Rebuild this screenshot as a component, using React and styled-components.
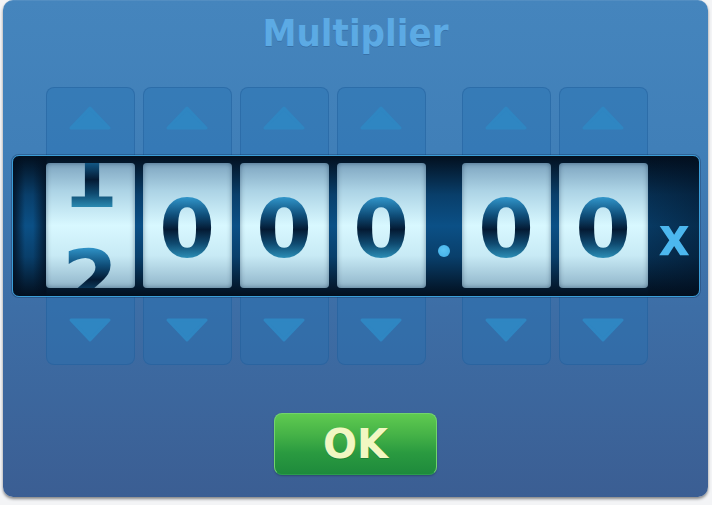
import React from 'react'
import styled, { createGlobalStyle } from 'styled-components'

let Global = createGlobalStyle`
  * {
    margin: 0;
    padding: 0;
    box-sizing: border-box;
  }
  html, body {
    background: #f3f4f6;
  }
  body {
    width: 712px;
    height: 505px;
    overflow: hidden;
    font-family: "DejaVu Sans", "Liberation Sans", sans-serif;
  }
`

let REEL_W = 89
let GAP = 8
let DOT_W = 20
let LINE = 100

let Panel = styled.div`
  margin: 0 4px 0 3px;
  height: 497px;
  border-radius: 10px;
  background: linear-gradient(to bottom, #4585bd 0%, #407fb8 30%, #3d6ea6 62%, #3b5e93 100%);
  box-shadow: 0 2px 3px rgba(0, 0, 0, 0.45), inset 0 1px 0 rgba(255, 255, 255, 0.08);
  display: flex;
  flex-direction: column;
  align-items: center;
  padding-top: 13px;
`

let Title = styled.h1`
  font-family: "DejaVu Sans Condensed", "DejaVu Sans", sans-serif;
  font-weight: bold;
  font-size: 38px;
  line-height: 40px;
  color: #5caae4;
  text-shadow: 0 1px 0 rgba(20, 60, 110, 0.25);
`

let Dial = styled.div`
  width: 688px;
  margin-top: 34px;
  display: flex;
  flex-direction: column;
`

let Track = styled.div`
  display: flex;
  gap: ${GAP}px;
  padding-left: ${p => p.$inset}px;
`

let Spacer = styled.div`
  width: ${DOT_W}px;
  flex: none;
`

let ArrowButton = styled.div`
  width: ${REEL_W}px;
  height: ${p => (p.$down ? 78 : 80)}px;
  flex: none;
  border-radius: 8px;
  background: rgba(38, 112, 178, 0.38);
  border: 1px solid rgba(30, 90, 150, 0.4);
  display: flex;
  justify-content: center;
  align-items: flex-start;
  padding-top: ${p => (p.$down ? 30 : 18)}px;
`

let UpRow = styled(Track)`
  margin-bottom: -12px;
`

let DownRow = styled(Track)`
  margin-top: -10px;
`

let Strip = styled.div`
  position: relative;
  z-index: 1;
  height: 142px;
  border: 1px solid #3b9ed8;
  border-radius: 7px;
  box-shadow: 0 0 0 1px rgba(20, 50, 90, 0.35);
  padding: 7px 0 8px;
  display: flex;
  align-items: stretch;
  background:
    linear-gradient(to right, rgba(2, 14, 30, 0.85) 0px, rgba(2, 14, 30, 0) 12px, rgba(2, 14, 30, 0) 20px, rgba(2, 14, 30, 0.75) 33px, rgba(2, 14, 30, 0) 34px),
    linear-gradient(to left, rgba(2, 14, 30, 0.55) 0px, rgba(2, 14, 30, 0.35) 50px, rgba(2, 14, 30, 0) 52px),
    linear-gradient(to bottom, #020f1e 0%, #093f6b 28%, #0b5086 50%, #093f6b 72%, #020f1e 100%);
`

let Reel = styled.div`
  width: ${REEL_W}px;
  flex: none;
  border-radius: 4px;
  overflow: hidden;
  position: relative;
  background: linear-gradient(to bottom, #7ea5c0 0%, #acd3e5 22%, #d8f8ff 50%, #c8eaf5 74%, #90b5ca 100%);
  box-shadow: inset 0 0 5px rgba(0, 30, 60, 0.45);
`

let Column = styled.div`
  display: flex;
  flex-direction: column;
`

let Digit = styled.div`
  height: ${LINE}px;
  font-weight: bold;
  font-size: 80px;
  line-height: ${LINE}px;
  text-align: center;
  background: linear-gradient(to bottom, #2e90c4 19%, #0f4d78 36%, #041a33 50%, #0f4a70 64%, #2a8cb4 78%);
  -webkit-background-clip: text;
  background-clip: text;
  color: transparent;
`

let DotSlot = styled.div`
  width: ${DOT_W}px;
  flex: none;
  display: flex;
  justify-content: center;
  padding-top: 82px;
`

let Dot = styled.div`
  width: 12px;
  height: 12px;
  border-radius: 50%;
  background: radial-gradient(circle at 45% 40%, #5cc4f4, #40aee6);
`

let Times = styled.div`
  margin-left: 11px;
  font-family: "DejaVu Sans Condensed", "DejaVu Sans", sans-serif;
  font-weight: bold;
  font-size: 54px;
  line-height: 54px;
  padding-top: 47px;
  color: #4cb7ee;
`

let OkButton = styled.button`
  margin-top: 48px;
  width: 163px;
  height: 62px;
  padding: 0;
  border-radius: 8px;
  border: 1px solid #72d46c;
  border-bottom-color: #2a9c4c;
  background: linear-gradient(to bottom, #5fca50 0%, #45b247 35%, #2a9a40 65%, #1e8a3c 100%);
  box-shadow: 0 1px 2px rgba(0, 0, 0, 0.25);
  font-family: "DejaVu Sans", sans-serif;
  font-weight: bold;
  font-size: 40px;
  line-height: 58px;
  color: #f2f7c2;
  text-shadow: 0 1px 0 rgba(10, 70, 30, 0.3);
  cursor: pointer;
`

function Triangle ({ down }) {
  return (
    <svg width="42" height="24" viewBox="0 0 42 24">
      <path
        d={down ? 'M21 22 L40 2 L2 2 Z' : 'M21 2 L40 22 L2 22 Z'}
        fill="#2f86c2"
        stroke="#2f86c2"
        strokeWidth="3"
        strokeLinejoin="round"
      />
    </svg>
  )
}

// value may be fractional: 1.5 means the reel is halfway between 1 and 2
function DigitReel ({ value }) {
  let base = Math.floor(value)
  let frac = value - base
  let shown = frac > 0 ? [base, (base + 1) % 10] : [base]
  let top = 16.5 - frac * LINE
  return (
    <Reel>
      <Column style={{ transform: `translateY(${top}px)` }}>
        {shown.map(d => (
          <Digit key={d}>{d}</Digit>
        ))}
      </Column>
    </Reel>
  )
}

let values = [1.5, 0, 0, 0, null, 0, 0]

function ArrowRow ({ down }) {
  let Row = down ? DownRow : UpRow
  return (
    <Row $inset={34}>
      {values.map((v, i) =>
        v === null ? (
          <Spacer key={i} />
        ) : (
          <ArrowButton key={i} $down={down}>
            <Triangle down={down} />
          </ArrowButton>
        )
      )}
    </Row>
  )
}

export default function App () {
  return (
    <>
      <Global />
      <Panel>
        <Title>Multiplier</Title>
        <Dial>
          <ArrowRow />
          <Strip>
            <Track $inset={33}>
              {values.map((v, i) =>
                v === null ? (
                  <DotSlot key={i}>
                    <Dot />
                  </DotSlot>
                ) : (
                  <DigitReel key={i} value={v} />
                )
              )}
            </Track>
            <Times>x</Times>
          </Strip>
          <ArrowRow down />
        </Dial>
        <OkButton>OK</OkButton>
      </Panel>
    </>
  )
}
